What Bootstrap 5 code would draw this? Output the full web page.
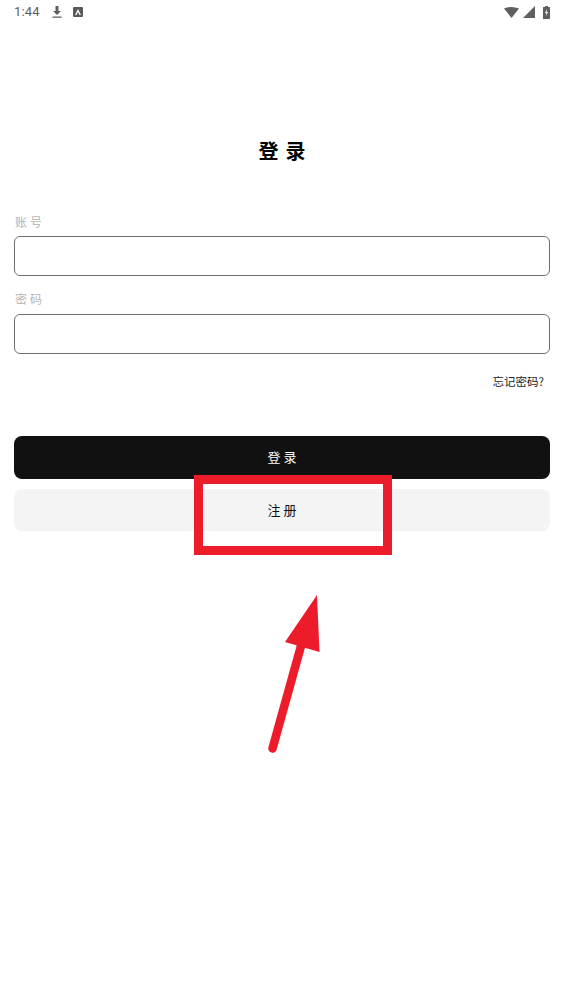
<!DOCTYPE html>
<html lang="zh">
<head>
    <meta charset="UTF-8">
    <title>登录</title>
    <link href="https://cdn.jsdelivr.net/npm/bootstrap@5.3.3/dist/css/bootstrap.min.css" rel="stylesheet">
    <style>
        body { font-family: "Noto Sans CJK SC", "Liberation Sans", sans-serif; background: #fff; height: 1004px; overflow: hidden; }
        .status-bar { height: 24px; padding: 0 14px; color: #5f5f5f; font-family: Roboto, sans-serif; font-size: 13px; }
        .status-time { letter-spacing: .2px; margin-right: 11px; }
        .status-gap { margin-right: 10px; }
        .login-title { margin: 114px 0 0; height: 26px; line-height: 26px; font-size: 20px; font-weight: 700; color: #000; letter-spacing: 7px; padding-left: 7px; }
        .login-form { padding: 0 14px; margin-top: 48px; }
        .field-label { display: block; height: 19px; line-height: 19px; margin-bottom: 5px; padding-left: 1px; font-size: 12px; color: #b5b5b5; letter-spacing: 3px; }
        .field-label-second { line-height: 18px; }
        .field-input { height: 40px; border: 1px solid #6f6f6f; border-radius: 6px; margin-bottom: 14px; box-shadow: none !important; }
        .forgot-link { height: 20px; line-height: 20px; margin-top: 17px; padding-right: 6px; font-size: 11.5px; color: #222; text-decoration: none; text-align: right; display: block; }
        .action-btn { display: block; width: 100%; border: 0; border-radius: 8px; font-size: 13px; letter-spacing: 3px; padding: 0 0 2px 3px; }
        .action-login { height: 43px; background: #111; color: #fff; margin-top: 45px; }
        .action-login:hover { background: #111; color: #fff; }
        .action-register { height: 42px; background: #f4f4f4; color: #111; margin-top: 10px; padding-bottom: 0; }
        .mark-box { position: absolute; left: 194px; top: 475px; width: 198px; height: 80px; border: 9px solid #ed1c2a; pointer-events: none; }
        .mark-arrow { position: absolute; left: 260px; top: 590px; pointer-events: none; }
    </style>
</head>
<body class="position-relative">
    <div class="status-bar d-flex align-items-center">
        <span class="status-time">1:44</span>
        <svg width="12" height="14" viewBox="0 0 12 14" class="status-gap" fill="#5f5f5f">
            <path d="M4.5 1h3v5h2.5L6 10 2 6h2.5z"/>
            <rect x="1.500" y="11.500" width="9" height="1.300"/>
        </svg>
        <svg width="10" height="10" viewBox="0 0 10 10">
            <rect width="10" height="10" rx="1" fill="#5a5a5a"/>
            <path d="M5 2 8 8H6.500L5 5 3.500 8H2z" fill="#fff"/>
        </svg>
        <div class="ms-auto d-flex align-items-center gap-1">
            <svg width="15" height="11" viewBox="0 0 15 11" fill="#5f5f5f"><path d="M0 1.500Q7.500-1.500 15 1.500L7.500 11z"/></svg>
            <svg width="12" height="12" viewBox="0 0 12 12" fill="#5f5f5f"><path d="M12 0V12H0z"/></svg>
            <svg width="7" height="13" viewBox="0 0 7 13" class="ms-1">
                <path d="M2 0h3v1h1.500q.5 0 .5.500V12.500q0 .5-.5.500H.5q-.5 0-.5-.5V1.500q0-.5.5-.5H2z" fill="#5f5f5f"/>
                <path d="M4 3 2 7h1.300L3 10l2-4H3.700z" fill="#fff"/>
            </svg>
        </div>
    </div>

    <h1 class="login-title text-center">登录</h1>

    <form class="login-form">
        <label class="field-label" for="account">账号</label>
        <input type="text" class="form-control field-input" id="account">
        <label class="field-label field-label-second" for="password">密码</label>
        <input type="password" class="form-control field-input" id="password">
        <a href="#" class="forgot-link">忘记密码?</a>
        <button type="button" class="btn action-btn action-login">登录</button>
        <button type="button" class="btn action-btn action-register">注册</button>
    </form>

    <div class="mark-box"></div>
    <svg class="mark-arrow" width="70" height="170" viewBox="260 590 70 170">
        <path d="M272.500 748.500 301 646" stroke="#ed1c2a" stroke-width="8.500" stroke-linecap="round" fill="none"/>
        <path d="M317 595 319.500 652 285 642z" fill="#ed1c2a"/>
    </svg>
</body>
</html>
